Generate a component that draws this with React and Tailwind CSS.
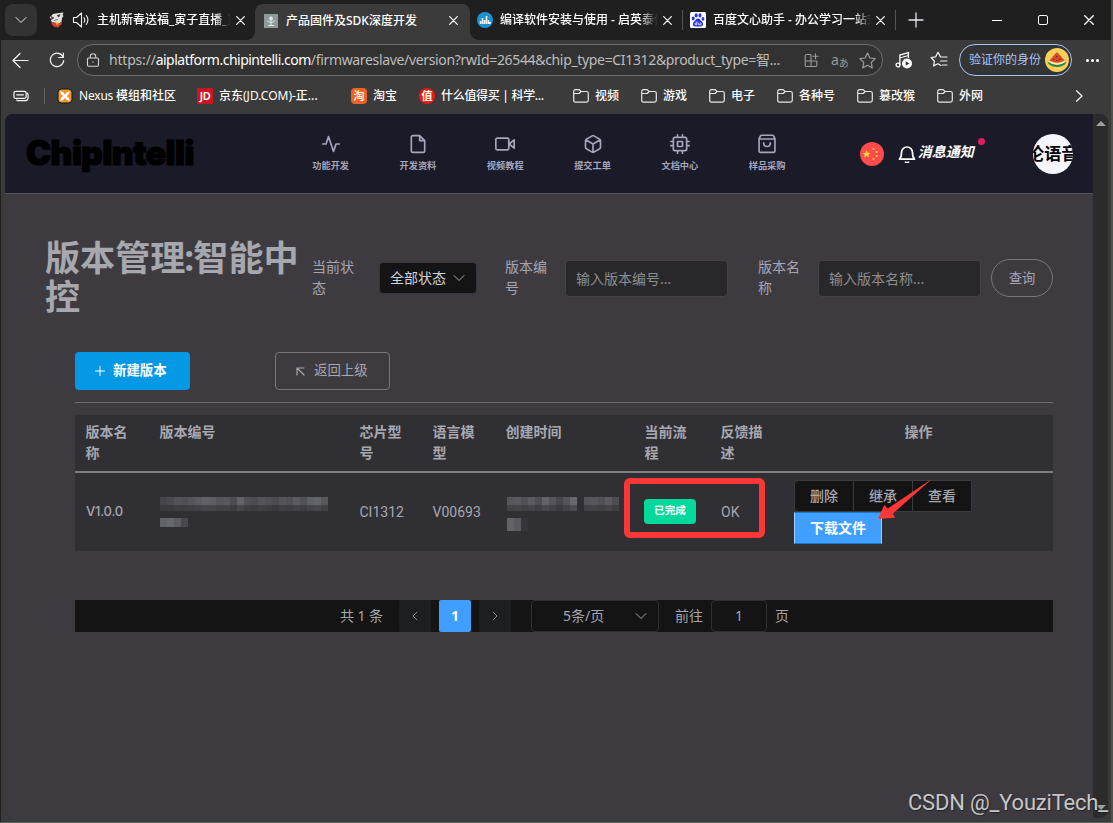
import clsx from 'clsx'

const CJK = "font-['Noto_Sans','Noto_Sans_CJK_SC',sans-serif]"

function Icon({ size = 16, box = 24, stroke = 2, className, children }) {
  return (
    <svg
      width={size}
      height={size}
      viewBox={`0 0 ${box} ${box}`}
      fill="none"
      stroke="currentColor"
      strokeWidth={stroke}
      strokeLinecap="round"
      strokeLinejoin="round"
      className={clsx('block shrink-0', className)}
    >
      {children}
    </svg>
  )
}

function Cross({ className, size = 9 }) {
  return (
    <Icon size={size} box={9} stroke={1.2} className={className}>
      <path d="M.7.7l7.6 7.6M8.3.7L.7 8.3" />
    </Icon>
  )
}

function Chevron({ className }) {
  return (
    <Icon size={12} box={12} stroke={1} className={className}>
      <path d="M1 3.5l5 5 5-5" />
    </Icon>
  )
}

function TabTitle({ children, className }) {
  return (
    <span className={clsx('block shrink-0 overflow-hidden whitespace-nowrap text-[12px] font-medium leading-[20px] text-white', className)}>
      {children}
    </span>
  )
}

function TabBar() {
  return (
    <div className="flex h-10 shrink-0 items-center bg-[#1f1f1f] pl-[5px]">
      <div className="flex h-8 w-8 shrink-0 items-center justify-center rounded-lg bg-[#333]">
        <Chevron className="text-gray-200" />
      </div>

      {/* Live stream tab */}
      <div className="flex w-[218px] shrink-0 items-center pl-3">
        <svg width="16" height="16" viewBox="0 0 16 16" className="shrink-0">
          <path d="M.5 5.500L4 2l4-.8 6.500-.7-1 2.500 1 1-1.500 2-.5 4-3 1.500-5-1-3-1.500 1.500-1.500z" fill="#e4e2de" />
          <path d="M2.500 9.500l3 1.500 4 1 3-2 .5 2-4 3.500-3.500-.5-3-3z" fill="#d8412a" />
          <path d="M6.500 10.500l4 .5-2.500 2.500z" fill="#e9a13b" />
          <path d="M2 4.500l3 1.500-2 1zM8 3.500l3-1-1 2.500zM5 8.500l4-1" fill="#3a3330" stroke="#3a3330" strokeWidth=".6" />
        </svg>
        <Icon size={18} box={18} stroke={1.1} className="ml-[7px] text-gray-100">
          <path d="M1.500 6.500h3L9.500 2v14l-5-4.500h-3zM12 6.700q1.600 2.300 0 4.600M14.300 4.500q3.200 4.500 0 9" />
        </Icon>
        <TabTitle className="ml-[7px] w-[134px] [mask-image:linear-gradient(90deg,#000_88%,transparent)]">主机新春送福_寅子直播_寅</TabTitle>
        <Cross className="ml-[5px] text-white" />
      </div>

      {/* Current tab */}
      <div className="relative flex h-9 w-[215px] shrink-0 items-center self-end rounded-t-lg bg-[#3b3b3b] pb-[3px] pl-[9px]">
        <span className="absolute -left-2 bottom-0 h-2 w-2 bg-[radial-gradient(circle_at_0_0,#1f1f1f_7.5px,#3b3b3b_8px)]" />
        <span className="absolute -right-2 bottom-0 h-2 w-2 bg-[radial-gradient(circle_at_100%_0,#1f1f1f_7.5px,#3b3b3b_8px)]" />
        <svg width="14" height="14" viewBox="0 0 14 14" className="shrink-0">
          <rect width="14" height="14" fill="#8e9a9a" />
          <circle cx="7" cy="4.500" r="2" fill="#dce4e3" />
          <path d="M3 6.500q4 4 8 0M7 6v6M4 11.500h6" stroke="#dce4e3" fill="none" />
        </svg>
        <TabTitle className="ml-2 w-[140px]">产品固件及SDK深度开发</TabTitle>
        <Cross className="ml-[23px] text-white" />
      </div>

      <div className="flex w-[212px] shrink-0 items-center pl-[7px]">
        <svg width="16" height="16" viewBox="0 0 16 16" className="shrink-0">
          <circle cx="8" cy="8" r="8" fill="#1b93d3" />
          <path d="M3.500 9v3M5.500 6v6M7.500 8v4M9.500 4v8M11.500 8v4M13 10v2" stroke="#fff" strokeWidth="1.500" />
        </svg>
        <TabTitle className="ml-[7px] w-[158px] [mask-image:linear-gradient(90deg,#000_88%,transparent)]">编译软件安装与使用 - 启英泰伦</TabTitle>
        <Cross className="ml-[5px] text-white" />
      </div>
      <span className="h-5 w-px shrink-0 bg-[#555]" />

      <div className="flex w-[212px] shrink-0 items-center pl-[7px]">
        <svg width="16" height="16" viewBox="0 0 16 16" className="shrink-0">
          <rect width="16" height="16" rx="1.500" fill="#fff" />
          <g fill="#2a34dc">
            <ellipse cx="3.200" cy="6.600" rx="1.500" ry="2" />
            <ellipse cx="6.200" cy="3.400" rx="1.500" ry="2.100" />
            <ellipse cx="10" cy="3.400" rx="1.500" ry="2.100" />
            <ellipse cx="13" cy="6.800" rx="1.400" ry="1.900" />
            <path d="M8 6.500c2 0 2.500 2 4 3.300 2 2 1 4.700-1.400 4.700H5.200c-2.500 0-3.200-2.800-1.200-4.700C5.500 8.500 6 6.500 8 6.500z" />
          </g>
          <path d="M6.900 9.500v3.300H5.500q-1-.9 0-1.800h1.400M8.800 10.700v2.100h2v-2.100" stroke="#fff" strokeWidth=".8" fill="none" />
        </svg>
        <TabTitle className="ml-[7px] w-[158px] [mask-image:linear-gradient(90deg,#000_90%,transparent)]">百度文心助手 - 办公学习一站式</TabTitle>
        <Cross className="ml-[5px] text-white" />
      </div>
      <span className="h-5 w-px shrink-0 bg-[#555]" />

      <Icon size={16} box={16} stroke={1.3} className="ml-3 text-gray-200">
        <path d="M1 8h14M8 1v14" />
      </Icon>
      <span className="ml-[68px] h-px w-[10px] shrink-0 bg-white" />
      <span className="ml-[36px] h-[10px] w-[10px] shrink-0 rounded-[2px] border border-white" />
      <Cross size={10} className="ml-[36px] text-white" />
    </div>
  )
}

function AddressBar() {
  return (
    <div className="flex h-10 shrink-0 items-center pl-[12px]">
      <Icon size={17} box={17} stroke={1.2} className="text-gray-100">
        <path d="M16 8.500H1M8 1.500l-7 7 7 7" />
      </Icon>
      <Icon size={16} box={16} stroke={1.200} className="ml-5 text-gray-100">
        <path d="M14.300 5.500A6.700 6.700 0 1 0 14.700 8.500M14.300 1v4.500H9.800" />
      </Icon>

      <div className="ml-3 flex h-8 w-[806px] shrink-0 items-center rounded-full border border-[#6d6d6d] bg-[#323232] pl-[8px] text-[#b4b4b4]">
        <Icon size={14} box={14} stroke={1.100} className="text-gray-300">
          <path d="M2.500 5h9q1 0 1 1v6q0 1.200-1 1.200h-9q-1 0-1-1.200V6q0-1 1-1zM4.300 5V3.500a2.700 2.700 0 0 1 5.400 0V5M7 8.800v.4" />
        </Icon>
        <div className="ml-[9px] w-[690px] shrink-0 whitespace-nowrap text-[14px] leading-[20px] tracking-[-0.34px] text-[#bdbdbd]">
          <span className="tracking-[-0.2px]">https://</span><span className="tracking-[-0.5px] text-white">aiplatform.chipintelli.com</span>/firmwareslave/version?rwId=26544&amp;chip_type=CI1312&amp;product_type=智...
        </div>
        <Icon size={15} box={15} stroke={1.100} className="ml-[5px] text-[#9a9a9a]">
          <path d="M7 1.500H2.500q-1.300 0-1.300 1.300v9.400q0 1.300 1.300 1.300h9q1.300 0 1.300-1.300V8H1.200M7 1.500v12M11.500.8v5M9 3.300h5" />
        </Icon>
        <div className="ml-3 flex shrink-0 items-end text-[#9a9a9a]">
          <span className="mb-px text-[14px] leading-[16px]">a</span>
          <span className="-mb-[2px] text-[10px] leading-[16px]">あ</span>
        </div>
        <Icon size={19} box={24} stroke={1.500} className="ml-[9px] text-[#9a9a9a]">
          <path d="M12 2.500l3 6.300 6.800.9-5 4.800 1.200 6.800-6-3.300-6 3.300 1.200-6.800-5-4.800 6.800-.9z" />
        </Icon>
      </div>

      <svg width="18" height="18" viewBox="0 0 18 18" className="ml-3 shrink-0" fill="none" stroke="#fff" strokeWidth="1.300">
        <circle cx="3" cy="14" r="1.900" />
        <path d="M4.900 14V4l8.500-2.300v5M4.900 7l8.500-2.500" />
        <circle cx="12" cy="12.500" r="5" fill="#fff" stroke="none" />
        <path d="M10.700 10.200v4.600l3.600-2.300z" fill="#333" stroke="none" />
      </svg>
      <Icon size={18} box={18} stroke={1.200} className="ml-[17px] text-gray-100">
        <path d="M10.500 5.900L8 1.300 5.700 5.800l-4.700.7 3.400 3.500-.8 4.900L8 12.700l3 1.800M11.500 6h5.500M10.500 10H17M12.500 14H17" />
      </Icon>

      <div className="ml-[11px] flex h-8 w-[113px] shrink-0 items-center rounded-full border border-[#a8c7fa] bg-[#343434] pl-[9px]">
        <span className="w-[72px] shrink-0 text-[12px] text-[#a8c7fa]">验证你的身份</span>
        <svg width="24" height="24" viewBox="0 0 24 24" className="ml-1 shrink-0">
          <circle cx="12" cy="12" r="12" fill="#f9cf58" />
          <path d="M2.500 13.500q9.500 7 19 0l-1.500 3q-8 5-16 0z" fill="#25834b" />
          <path d="M3.500 12.800q8.500 5.500 17 0v1q-8.500 5.500-17 0z" fill="#fff4d4" />
          <path d="M12 4.500q1 0 1.500 1l6 7q-7.500 4.300-15 0l6-7q.5-1 1.500-1z" fill="#d94a2a" />
          <path d="M11.700 8v1M8.700 11v1M12 12v1M15 10.500v1" stroke="#50291e" strokeWidth="1.200" />
        </svg>
      </div>
      <div className="ml-[14px] flex gap-[2px]">
        {[0, 1, 2].map((n) => <span key={n} className="h-[3px] w-[3px] rounded-full bg-white" />)}
      </div>
    </div>
  )
}

const folders = [
  { name: '视频', width: 'w-[68px]' },
  { name: '游戏', width: 'w-[68px]' },
  { name: '电子', width: 'w-[68px]' },
  { name: '各种号', width: 'w-[80px]' },
  { name: '篡改猴', width: 'w-[80px]' },
  { name: '外网', width: 'w-[68px]' },
]

function Bookmarks() {
  return (
    <div className="flex h-[34px] shrink-0 items-center whitespace-nowrap pb-[2px] pl-[13px] text-[12px] font-medium text-white">
      <Icon size={16} box={17} stroke={1.300} className="text-gray-100">
        <path d="M3 3.500h9q2 0 2 2v3.500q0 2-2 2H3q-2 0-2-2V5.500q0-2 2-2zM4 7.200h7M15.300 5.500q.7.500.7 2v2.500q0 3.500-3.500 3.500H6q-1.500 0-2-.7" />
      </Icon>
      <span className="ml-[15px] h-4 w-px bg-[#666]" />

      <div className="ml-[12px] flex w-[140px] shrink-0 items-center">
        <svg width="16" height="16" viewBox="0 0 16 16" className="shrink-0">
          <rect x="1" y="1" width="14" height="14" rx="3.500" fill="#f0952b" stroke="#161616" />
          <path d="M3 3q4 .5 5 4Q9 4 13 3 12 7 9.500 8q3 1.500 3.500 5-4-.5-5-3.500Q7 12.500 3 13q.5-4 3.500-5Q3.500 7 3 3z" fill="#fff" />
        </svg>
        <span className="ml-[6px]"><span className="font-normal tracking-[-0.2px]">Nexus </span>模组和社区</span>
      </div>

      <div className="flex w-[154px] shrink-0 items-center">
        <span className="flex h-4 w-4 items-center justify-center bg-[#c91623] text-[11px] font-semibold tracking-[-0.5px]">JD</span>
        <span className="ml-[6px]">京东<span className="font-normal">(JD.COM)-</span>正...</span>
      </div>

      <div className="flex w-[68px] shrink-0 items-center">
        <span className="flex h-4 w-4 items-center justify-center rounded-[4px] bg-[#ee6320] text-[11px]">淘</span>
        <span className="ml-[6px]">淘宝</span>
      </div>

      <div className="flex w-[154px] shrink-0 items-center">
        <span className="flex h-4 w-4 items-center justify-center rounded-full bg-[#f3150c] text-[11px] font-bold">值</span>
        <span className="ml-[6px] tracking-[-0.3px]">什么值得买 | 科学...</span>
      </div>

      {folders.map(({ name, width }) => (
        <div key={name} className={clsx('flex shrink-0 items-center', width)}>
          <Icon size={16} box={16} stroke={1.200} className="text-gray-200">
            <path d="M2.500 1.700h3.700l1.800 1.800h5.500q1.800 0 1.800 1.800v7q0 1.800-1.800 1.800h-11Q.7 14.100.7 12.300V3.500Q.7 1.700 2.500 1.700zM.7 5.500h5.500L8 3.500" />
          </Icon>
          <span className="ml-[6px]">{name}</span>
        </div>
      ))}

      <Icon size={12} box={12} stroke={1.200} className="ml-[68px] text-gray-100">
        <path d="M3.500.8L9 6l-5.500 5.200" />
      </Icon>
    </div>
  )
}

const navItems = [
  { label: '功能开发', icon: <path d="M22 12h-4l-3 9L9 3l-3 9H2" /> },
  { label: '开发资料', icon: <path d="M14 2H6a2 2 0 0 0-2 2v16a2 2 0 0 0 2 2h12a2 2 0 0 0 2-2V8zM14 2v6h6" /> },
  { label: '视频教程', icon: <path d="M23 7l-6 5 6 5V7zM2.500 5H15a1.500 1.500 0 0 1 1.500 1.500v11A1.500 1.500 0 0 1 15 19H2.500A1.500 1.500 0 0 1 1 17.500v-11A1.500 1.500 0 0 1 2.500 5z" /> },
  { label: '提交工单', icon: <path d="M21 16V8a2 2 0 0 0-1-1.730l-7-4a2 2 0 0 0-2 0l-7 4A2 2 0 0 0 3 8v8a2 2 0 0 0 1 1.730l7 4a2 2 0 0 0 2 0l7-4A2 2 0 0 0 21 16zM3.270 6.960L12 12.010l8.730-5.050M12 22.080V12" /> },
  { label: '文档中心', icon: <path d="M6 4h12a2 2 0 0 1 2 2v12a2 2 0 0 1-2 2H6a2 2 0 0 1-2-2V6a2 2 0 0 1 2-2zM9 9h6v6H9zM9 1v3M15 1v3M9 20v3M15 20v3M20 9h3M20 14h3M1 9h3M1 14h3" /> },
  { label: '样品采购', icon: <path d="M5.500 1.500h13q1 0 1.500 1l1.500 3V20a2 2 0 0 1-2 2h-15a2 2 0 0 1-2-2V5.500l1.500-3q.5-1 1.500-1zM2.700 6h18.600M8 10.500q0 4.500 4 4.500t4-4.500" /> },
]

function SiteHeader() {
  return (
    <header className="flex h-20 shrink-0 items-center border-b border-[#55555e] bg-[#1a1a28] pl-[21px]">
      <div className="mt-[-2px] w-[261px] shrink-0 whitespace-nowrap font-['Inter'] text-[33.5px] font-black leading-[40px] tracking-[-0.45px] text-black [-webkit-text-stroke:1.2px_#000]">
        ChipIntelli
      </div>

      <nav className="flex shrink-0 pb-px">
        {navItems.map(({ label, icon }) => (
          <div key={label} className="flex w-[87.3px] flex-col items-center text-[#a5a5bb]">
            <Icon size={20}>{icon}</Icon>
            <span className="mt-[6px] text-[9.200px] font-bold leading-[12px]">{label}</span>
          </div>
        ))}
      </nav>

      <svg width="24" height="24" viewBox="0 0 24 24" className="ml-[49px] shrink-0">
        <circle cx="12" cy="12" r="12" fill="#ff4b4b" />
        <g fill="#ffd83d">
          <path d="M6.500 8l1.100 2.800 3 .1-2.300 1.800.8 2.900-2.600-1.700-2.500 1.700.8-2.900L2.500 10.900l3-.1z" />
          <circle cx="13.500" cy="7" r="1.100" />
          <circle cx="16.700" cy="10" r="1.100" />
          <circle cx="16.700" cy="14" r="1.100" />
          <circle cx="13.500" cy="17" r="1.100" />
        </g>
      </svg>

      <div className="relative ml-[14px] flex w-[135px] shrink-0 items-center text-white">
        <Icon size={18} box={18} stroke={1.700}>
          <path d="M1.500 14.200h15Q14.500 12.300 14.500 7.500a5.500 5.500 0 0 0-11 0q0 4.800-2 6.700zM7.500 17.200q1.500.9 3 0" />
        </Icon>
        <span className="mb-1 ml-[2px] text-[14px] font-bold italic">消息通知</span>
        <span className="absolute left-[80px] -top-[3px] h-[7px] w-[7px] rounded-full bg-[#e11d5f]" />
      </div>

      <div className="flex h-10 w-10 shrink-0 items-center justify-center overflow-hidden whitespace-nowrap rounded-full bg-[#f6f6ff] text-[17px] font-bold text-black">
        <span className="shrink-0">伦语音</span>
      </div>
    </header>
  )
}

function Filters() {
  return (
    <div className="flex h-[78px] items-center pl-10 text-[14px] leading-[21px] text-[#a5a5b8]">
      <h1 className="mt-[-3px] w-[267px] shrink-0 text-[35.1px] font-bold leading-[38.7px] text-[#a7a7ae]">
        版本管理<span className="inline-block w-[8px] -indent-px">:</span>智能中<br />控
      </h1>
      <span className="mt-[-2px] w-[67px] shrink-0 pr-[22px]">当前状态</span>
      <div className="flex h-[32px] w-[98px] shrink-0 items-center rounded border border-[#35353a] bg-[#141414] pl-[10px] text-[#cfd3dc]">
        <span className="mb-[2px]">全部状态</span>
        <Chevron className="ml-[7px] text-[#a3a6ad]" />
      </div>
      <span className="mt-[-2px] ml-[28px] w-[60px] shrink-0 pr-[16px]">版本编号</span>
      <div className="h-[37px] w-[163px] shrink-0 rounded border border-[#434347] bg-[#28282a] px-[10px] pt-[7px] text-[#8d8d8d]">输入版本编号...</div>
      <span className="mt-[-2px] ml-[30px] w-[60px] shrink-0 pr-[16px]">版本名称</span>
      <div className="h-[37px] w-[163px] shrink-0 rounded border border-[#434347] bg-[#28282a] px-[10px] pt-[7px] text-[#8d8d8d]">输入版本名称...</div>
      <div className="ml-[10px] flex h-[38px] w-[62px] shrink-0 items-center justify-center rounded-full border border-[#77777f] text-[13.300px]">查询</div>
    </div>
  )
}

// brightness of every 7px block in a censored line
const codeMask = [40, 48, 62, 56, 66, 76, 88, 83, 67, 72, 52, 92, 60, 50, 66, 57, 48, 66, 58, 76, 62, 86, 95, 70]
const dateMask = [68, 75, 60, 78, 54, 90, 68, 42, 66, 100, 0, 65, 70, 58, 77, 53]

function MaskLine({ cells, dim = 1, className }) {
  return (
    <div className={clsx('flex', className)}>
      {cells.map((v, i) => (
        <span key={i} className="h-full w-[7px] bg-[#d6d9e2]" style={{ opacity: (v / 300) * dim }} />
      ))}
    </div>
  )
}

const columns = [
  ['版本名称', 'w-[74px]'],
  ['版本编号', 'w-[200px]'],
  ['芯片型号', 'w-[73px]'],
  ['语言模型', 'w-[73px]'],
  ['创建时间', 'w-[139px]'],
  ['当前流程', 'w-[76px]'],
  ['反馈描述', 'w-[74px]'],
]

function VersionTable() {
  return (
    <div className="mt-3 bg-[#302f34] text-[14px] text-[#a7a7b0]">
      <div className="flex h-[58px] border-b-2 border-[#807e85] pt-[6px] font-bold leading-[21px]">
        {columns.map(([title, width]) => (
          <div key={title} className={clsx('shrink-0 pl-[10.500px] pr-[10px]', width)}>{title}</div>
        ))}
        <div className="grow text-center">操作</div>
      </div>

      <div className="relative flex h-[78px] items-center font-['Roboto']">
        <div className="w-[74px] pl-[11px] font-['Inter'] text-[13px] font-medium tracking-[-0.2px]">V1.0.0</div>
        <div className="h-[44px] w-[200px] pl-[11px]">
          <div className="h-[30px] pt-[7px]">
            <MaskLine cells={codeMask} className="h-2" />
            <MaskLine cells={codeMask} dim={0.45} className="h-[6px]" />
          </div>
          <MaskLine cells={[92, 98, 80, 45]} className="mt-[-2px] h-[9px]" />
        </div>
        <div className="w-[73px] pl-[10.500px]">CI1312</div>
        <div className="w-[73px] pl-[10.500px]">V00693</div>
        <div className="h-[44px] w-[139px] pl-[12px]">
          <div className="h-[30px] pt-[7px]">
            <MaskLine cells={dateMask} className="h-2" />
            <MaskLine cells={dateMask} dim={0.5} className="h-[6px]" />
          </div>
          <MaskLine cells={[90, 74, 12]} className="mt-[-2px] h-[13px]" />
        </div>
        <div className="mt-[-1px] w-[76px] pl-[10px]">
          <div className={clsx('flex h-[25px] w-[52px] items-center justify-center rounded bg-[#04d89b] pb-px text-[10.600px] font-bold text-white', CJK)}>已完成</div>
        </div>
        <div className="w-[74px] pl-[11px]">OK</div>
        <div className={clsx('flex w-[200px] flex-wrap pl-[10px] font-medium', CJK)}>
          <div className="flex h-8 w-[60px] items-center justify-center rounded-l border border-[#3b3b40] bg-[#141414] pb-[2px]">删除</div>
          <div className="flex h-8 w-[59px] items-center justify-center border-y border-r border-[#3b3b40] bg-[#141414] pb-[2px]">继承</div>
          <div className="flex h-8 w-[59px] items-center justify-center border-y border-r border-[#3b3b40] bg-[#141414] pb-[2px]">查看</div>
          <div className="flex h-8 w-[88px] items-center justify-center border border-x-[#a0cfff] border-y-[#1677cc] bg-[#409eff] pb-[2px] font-bold text-white">下载文件</div>
        </div>

        {/* Highlight box and arrow drawn over the row */}
        <div className="absolute left-[549px] top-[5px] h-[60px] w-[141px] rounded-[6px] border-[6px] border-[#fc3737]" />
        <svg width="56" height="42" viewBox="0 0 56 42" className="absolute left-[802px] top-[5px]">
          <path d="M55.500.500L16 35.500l2 4.200L.800 41 7.300 27l3.500 3.500z" fill="#fc3737" />
        </svg>
      </div>
    </div>
  )
}

function Pagination() {
  return (
    <div className="mt-[49px] flex h-8 items-center bg-[#141414] text-[14px] leading-[20px] text-[#a3a6ad]">
      <span className="w-[324px] shrink-0 whitespace-nowrap pl-[265px] tracking-[-0.1px]">共 1 条</span>
      <div className="flex h-8 w-8 shrink-0 items-center justify-center rounded-[2px] bg-[#1d1e20]">
        <Chevron className="rotate-90 scale-[.8]" />
      </div>
      <div className="ml-2 flex h-8 w-8 shrink-0 items-center justify-center rounded-[2px] bg-[#409eff] pb-px font-bold text-white">1</div>
      <div className="ml-2 flex h-8 w-8 shrink-0 items-center justify-center rounded-[2px] bg-[#1d1e20]">
        <Chevron className="-rotate-90 scale-[.8]" />
      </div>
      <div className="ml-5 flex h-8 w-[128px] shrink-0 items-center rounded border border-[#303033] pl-[31px]">
        <span className="w-[72px]">5条/页</span>
        <Chevron />
      </div>
      <span className="ml-4">前往</span>
      <div className="ml-2 flex h-8 w-14 shrink-0 items-center justify-center rounded border border-[#303033] pb-px">1</div>
      <span className="ml-2">页</span>
    </div>
  )
}

export default function App() {
  return (
    <div className={clsx('relative flex h-[823px] w-[1113px] flex-col overflow-hidden bg-[#3b3b3b]', CJK)}>
      <TabBar />
      <AddressBar />
      <Bookmarks />

      <div className="ml-[5px] flex h-[704px] w-[1103px] overflow-hidden rounded-lg bg-[#2b2b2b]">
        <main className="flex w-[1088px] shrink-0 flex-col bg-[#3d3b40]">
          <SiteHeader />
          <div className="pt-[45px]">
            <Filters />
          </div>
          <div className="mt-[35px] px-[70px] pr-10">
            <div className="flex h-[51px] items-start border-b border-[#68686e] text-[13.400px]">
              <div className="flex h-[38px] w-[115px] shrink-0 items-center rounded bg-[#0598e4] pl-5 font-bold text-white">
                <Icon size={10} box={10} stroke={1}><path d="M5 .5v9M.5 5h9" /></Icon>
                <span className="mb-[2px] ml-[8px]">新建版本</span>
              </div>
              <div className="ml-[85px] flex h-[38px] w-[115px] shrink-0 items-center rounded border border-[#77777f] pl-5 text-[#a7a7b0]">
                <Icon size={9} box={9} stroke={1.200}><path d="M1 8V1h7M1 1l7 7" /></Icon>
                <span className="mb-[2px] ml-[9px]">返回上级</span>
              </div>
            </div>
            <VersionTable />
            <Pagination />
          </div>
        </main>
        <div className="flex w-[15px] flex-col items-center justify-between pb-[8px] pt-[7px]">
          <span className="h-0 w-0 border-x-[5px] border-b-[5px] border-x-transparent border-b-[#a0a0a0]" />
          <span className="h-0 w-0 border-x-[5px] border-t-[5px] border-x-transparent border-t-[#a0a0a0]" />
        </div>
      </div>

      {/* Window edges */}
      <span className="absolute left-0 top-0 h-full w-px bg-[#202020]" />
      <span className="absolute right-0 top-0 h-full w-[2px] bg-[#4b544b]" />
      <span className="absolute bottom-0 left-0 h-px w-full bg-[#59615a]" />

      <div className="absolute left-[908px] top-[790px] whitespace-nowrap font-['Roboto'] text-[22px] leading-[26px] tracking-[-0.2px] text-[#c6c6c8] [text-shadow:1px_1px_1px_#222]">
        CSDN @_YouziTech_
      </div>
    </div>
  )
}
